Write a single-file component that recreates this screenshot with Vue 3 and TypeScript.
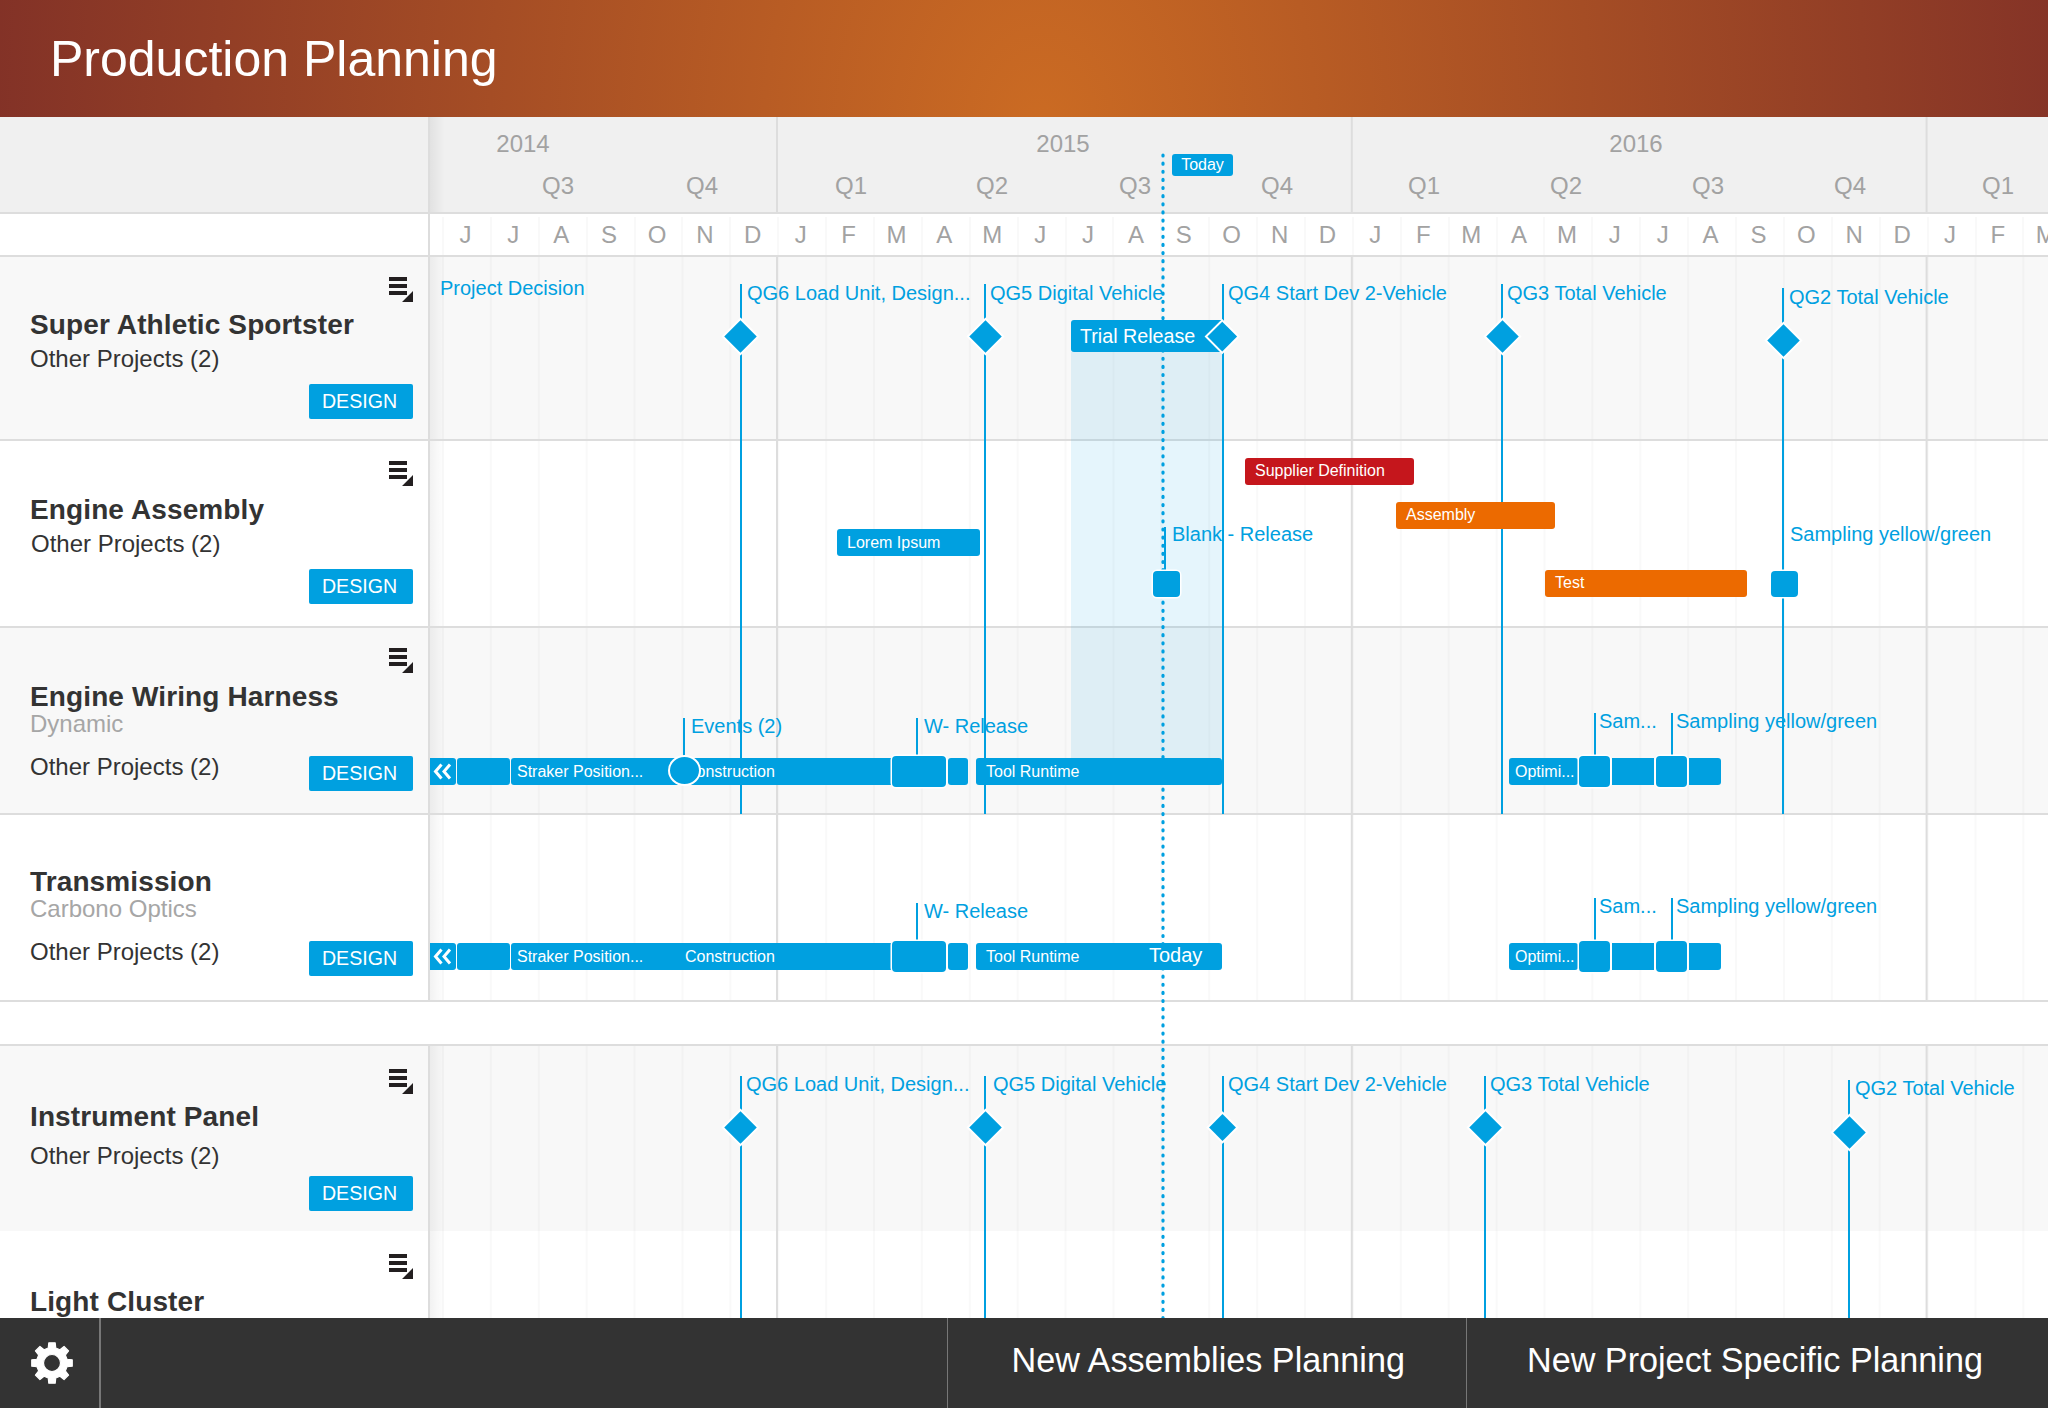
<script setup lang="ts">
// Production planning gantt: rows flow on the left, chart items sit on a canvas in page coordinates.
const BLUE = '#00a0e0'
const RED = '#c5161c'
const ORANGE = '#ec6a00'

const years = [
  { text: '2014', x: 523 },
  { text: '2015', x: 1063 },
  { text: '2016', x: 1636 },
]
const quarters = [
  ['Q3', 558], ['Q4', 702], ['Q1', 851], ['Q2', 992], ['Q3', 1135], ['Q4', 1277],
  ['Q1', 1424], ['Q2', 1566], ['Q3', 1708], ['Q4', 1850], ['Q1', 1998],
] as [string, number][]
const months = 'JJASONDJFMAMJJASONDJFMAMJJASONDJFM'.split('')

const rows = [
  { id: 'r1', title: 'Super Athletic Sportster', menu: true },
  { id: 'r2', title: 'Engine Assembly', menu: true },
  { id: 'r3', title: 'Engine Wiring Harness', sub: 'Dynamic', menu: true },
  { id: 'r4', title: 'Transmission', sub: 'Carbono Optics', menu: false },
]

type Line = { x: number; y1: number; y2: number }
const lines: Line[] = [
  { x: 740.5, y1: 284, y2: 814 },
  { x: 985, y1: 284, y2: 814 },
  { x: 1222.5, y1: 284, y2: 814 },
  { x: 1502, y1: 284, y2: 814 },
  { x: 1783, y1: 288, y2: 814 },
  { x: 1165, y1: 527, y2: 571 },
  { x: 684, y1: 718, y2: 756 },
  { x: 916.5, y1: 718, y2: 757 },
  { x: 1595, y1: 713, y2: 757 },
  { x: 1672, y1: 713, y2: 757 },
  { x: 916.5, y1: 903, y2: 942 },
  { x: 1595, y1: 898, y2: 942 },
  { x: 1672, y1: 898, y2: 942 },
  { x: 740.5, y1: 1076, y2: 1318 },
  { x: 985, y1: 1076, y2: 1318 },
  { x: 1222.5, y1: 1076, y2: 1318 },
  { x: 1485, y1: 1076, y2: 1318 },
  { x: 1849, y1: 1080, y2: 1318 },
]

// y is the text baseline
const labels = [
  { text: 'Project Decision', x: 440, y: 295 },
  { text: 'QG6 Load Unit, Design...', x: 747, y: 300 },
  { text: 'QG5 Digital Vehicle', x: 990, y: 300 },
  { text: 'QG4 Start Dev 2-Vehicle', x: 1228, y: 300 },
  { text: 'QG3 Total Vehicle', x: 1507, y: 300 },
  { text: 'QG2 Total Vehicle', x: 1789, y: 304 },
  { text: 'Blank - Release', x: 1172, y: 541 },
  { text: 'Sampling yellow/green', x: 1790, y: 541 },
  { text: 'Events (2)', x: 691, y: 733 },
  { text: 'W- Release', x: 924, y: 733 },
  { text: 'Sam...', x: 1599, y: 728 },
  { text: 'Sampling yellow/green', x: 1676, y: 728 },
  { text: 'W- Release', x: 924, y: 918 },
  { text: 'Sam...', x: 1599, y: 913 },
  { text: 'Sampling yellow/green', x: 1676, y: 913 },
  { text: 'QG6 Load Unit, Design...', x: 746, y: 1091 },
  { text: 'QG5 Digital Vehicle', x: 993, y: 1091 },
  { text: 'QG4 Start Dev 2-Vehicle', x: 1228, y: 1091 },
  { text: 'QG3 Total Vehicle', x: 1490, y: 1091 },
  { text: 'QG2 Total Vehicle', x: 1855, y: 1095 },
]

type Bar = { x1: number; x2: number; y: number; h?: number; text?: string; color?: string; pad?: number; cls?: string }

function track(y: number): Bar[] {
  return [
    { x1: 430, x2: 456, y, cls: 'flat-left chev' },
    { x1: 457, x2: 510, y },
    { x1: 511, x2: 684, y, text: 'Straker Position...', pad: 6, cls: 'flat-right' },
    { x1: 684, x2: 892, y, text: 'Construction', pad: 1, cls: 'flat-both' },
    { x1: 948, x2: 967.5, y },
    { x1: 976, x2: 1222, y, text: 'Tool Runtime', pad: 10 },
    { x1: 1509, x2: 1578, y, text: 'Optimi...', pad: 6 },
    { x1: 1612, x2: 1654, y, cls: 'flat-both' },
    { x1: 1689, x2: 1720.5, y, cls: 'flat-left' },
    { x1: 1579, x2: 1610, y: y - 2, h: 31, cls: 'node' },
    { x1: 1656, x2: 1687, y: y - 2, h: 31, cls: 'node' },
    { x1: 891.5, x2: 946, y: y - 2, h: 31, cls: 'node' },
  ]
}

const bars: Bar[] = [
  { x1: 1071, x2: 1222, y: 320, h: 32, text: 'Trial Release', pad: 9, cls: 'large flat-right' },
  { x1: 1245, x2: 1414, y: 458, text: 'Supplier Definition', color: RED, pad: 10, cls: 'lift' },
  { x1: 1396, x2: 1555, y: 502, text: 'Assembly', color: ORANGE, pad: 10, cls: 'lift' },
  { x1: 837, x2: 980, y: 529, text: 'Lorem Ipsum', pad: 10 },
  { x1: 1545, x2: 1747, y: 570, text: 'Test', color: ORANGE, pad: 10, cls: 'lift' },
  { x1: 1153, x2: 1180, y: 571, h: 26, cls: 'node' },
  { x1: 1771, x2: 1798, y: 571, h: 26, cls: 'node' },
  ...track(758),
  ...track(943),
]

const diamonds = [
  { x: 740.5, y: 336, s: 23 },
  { x: 985, y: 336, s: 23 },
  { x: 1222.5, y: 336, s: 20.5 },
  { x: 1502, y: 336, s: 23 },
  { x: 1783, y: 340, s: 23 },
  { x: 740.5, y: 1127, s: 23 },
  { x: 985, y: 1127, s: 23 },
  { x: 1222.5, y: 1127, s: 19 },
  { x: 1485, y: 1127, s: 23 },
  { x: 1849, y: 1132, s: 23 },
]

function barStyle(b: Bar) {
  return {
    left: `${b.x1}px`,
    top: `${b.y}px`,
    width: `${b.x2 - b.x1}px`,
    height: `${b.h ?? 27}px`,
    paddingLeft: `${b.pad ?? 0}px`,
    background: b.color ?? BLUE,
  }
}

function gearPath(cx: number, cy: number, outer: number, base: number, hole: number) {
  const pt = (deg: number, r: number) => {
    const a = (deg * Math.PI) / 180
    return `${(cx + Math.sin(a) * r).toFixed(2)} ${(cy - Math.cos(a) * r).toFixed(2)}`
  }
  let d = ''
  for (let i = 0; i < 8; i++) {
    const c = i * 45
    d += `${i ? 'L' : 'M'}${pt(c - 14, base)} L${pt(c - 9, outer)} L${pt(c + 9, outer)} L${pt(c + 14, base)} `
  }
  d += `Z M${cx - hole} ${cy} a${hole} ${hole} 0 1 0 ${hole * 2} 0 a${hole} ${hole} 0 1 0 ${-hole * 2} 0 Z`
  return d
}
const gear = gearPath(26, 26, 20.5, 15.5, 8.5)
</script>

<template>
  <div class="page">
    <header class="top">
      <h1>Production Planning</h1>
    </header>

    <div class="scale">
      <div class="scale-side"></div>
      <div class="scale-track">
        <span v-for="y in years" :key="y.text" class="tick year" :style="{ left: `${y.x - 430}px` }">{{ y.text }}</span>
        <span v-for="(q, i) in quarters" :key="i" class="tick quarter" :style="{ left: `${q[1] - 430}px` }">{{ q[0] }}</span>
      </div>
    </div>

    <div class="months">
      <div class="months-side"></div>
      <div class="months-track">
        <span v-for="(m, i) in months" :key="i" class="month">{{ m }}</span>
      </div>
    </div>

    <section v-for="r in rows" :key="r.id" class="row" :class="r.id">
      <div class="side">
        <svg class="menu" :class="{ off: !r.menu }" viewBox="0 0 25 25" width="25" height="25">
          <path d="M1 0h18v4H1zM1 7h18v4H1zM1 14h18v4H1zM25 14v11H14z" fill="#231f20" />
        </svg>
        <div class="title">{{ r.title }}</div>
        <template v-if="r.sub">
          <div class="sub">{{ r.sub }}</div>
          <div class="foot">
            <span class="other">Other Projects (2)</span>
            <button class="design">DESIGN</button>
          </div>
        </template>
        <template v-else>
          <div class="other">Other Projects (2)</div>
          <button class="design">DESIGN</button>
        </template>
      </div>
      <div class="lane"></div>
    </section>

    <div class="gap"></div>

    <section class="row r5">
      <div class="side">
        <svg class="menu" viewBox="0 0 25 25" width="25" height="25">
          <path d="M1 0h18v4H1zM1 7h18v4H1zM1 14h18v4H1zM25 14v11H14z" fill="#231f20" />
        </svg>
        <div class="title">Instrument Panel</div>
        <div class="other">Other Projects (2)</div>
        <button class="design">DESIGN</button>
      </div>
      <div class="lane"></div>
    </section>

    <!-- the last row runs under the bottom bar, only its title shows -->
    <section class="row r6">
      <div class="side">
        <svg class="menu" viewBox="0 0 25 25" width="25" height="25">
          <path d="M1 0h18v4H1zM1 7h18v4H1zM1 14h18v4H1zM25 14v11H14z" fill="#231f20" />
        </svg>
        <div class="title">Light Cluster</div>
      </div>
      <div class="lane"></div>
    </section>

    <footer class="bar">
      <div class="gear-cell">
        <svg viewBox="0 0 52 52" width="52" height="52">
          <path :d="gear" fill="#fff" stroke="#fff" stroke-width="1.2" stroke-linejoin="round" fill-rule="evenodd" />
        </svg>
      </div>
      <div class="bar-space"></div>
      <a class="bar-link">New Assemblies Planning</a>
      <a class="bar-link">New Project Specific Planning</a>
    </footer>

    <div class="canvas">
      <div class="span"></div>
      <svg class="today-line" width="4" height="1165">
        <line x1="2" y1="2" x2="2" y2="1165" stroke="#00a0e0" stroke-width="3.2" stroke-linecap="round" stroke-dasharray="1 7.13" />
      </svg>
      <div class="today-tag">Today</div>

      <div
        v-for="(l, i) in lines"
        :key="`l${i}`"
        class="vline"
        :style="{ left: `${l.x - 1}px`, top: `${l.y1}px`, height: `${l.y2 - l.y1}px` }"
      ></div>
      <span
        v-for="(t, i) in labels"
        :key="`t${i}`"
        class="label"
        :style="{ left: `${t.x}px`, top: `${t.y - 19}px` }"
      >{{ t.text }}</span>

      <div v-for="(b, i) in bars" :key="`b${i}`" class="gbar" :class="b.cls" :style="barStyle(b)">
        <svg v-if="b.cls && b.cls.includes('chev')" width="20" height="17" viewBox="0 0 20 17">
          <path d="M8.5 1.5 2.5 8.5l6 7M17 1.5l-6 7 6 7" fill="none" stroke="#fff" stroke-width="3" />
        </svg>
        {{ b.text }}
      </div>

      <div class="event"></div>
      <span class="label today-inline">Today</span>

      <div
        v-for="(d, i) in diamonds"
        :key="`d${i}`"
        class="diamond"
        :style="{ left: `${d.x - d.s / 2}px`, top: `${d.y - d.s / 2}px`, width: `${d.s}px`, height: `${d.s}px` }"
      ></div>
    </div>
  </div>
</template>

<style>
html,
body {
  margin: 0;
  overflow: hidden;
}
</style>

<style scoped>
.page {
  position: relative;
  height: 100vh;
  display: flex;
  flex-direction: column;
  overflow: hidden;
  font-family: 'Liberation Sans', Arial, sans-serif;
  color: #333;
  background: #fff;
}

.top {
  flex: none;
  height: 117px;
  display: flex;
  align-items: center;
  padding-left: 50px;
  background: radial-gradient(ellipse 1100px 1500px at 1040px 130px, #cb6b23 0%, #7f2f27 100%);
}
.top h1 {
  margin: 1px 0 0;
  font-size: 50px;
  line-height: 60px;
  font-weight: 400;
  color: #fff;
}

.scale {
  flex: none;
  height: 97px;
  box-sizing: border-box;
  display: flex;
  background: #f0f0f0;
  border-bottom: 2px solid #ddd;
}
.scale-side,
.months-side {
  flex: none;
  width: 428px;
  border-right: 2px solid #ddd;
}
.scale-track {
  flex: 1;
  position: relative;
  background-image: linear-gradient(90deg, rgba(0, 0, 0, 0.06), transparent 15px),
    linear-gradient(90deg, #ddd 2px, transparent 2px);
  background-size: 100% 100%, 574.8px 100%;
  background-position: 0 0, 346px 0;
  background-repeat: no-repeat, repeat-x;
}
.tick {
  position: absolute;
  transform: translateX(-50%);
  font-size: 24px;
  line-height: 28px;
  color: #a2a2a2;
}
.year {
  top: 13px;
}
.quarter {
  top: 55px;
}

.months {
  flex: none;
  height: 43px;
  box-sizing: border-box;
  display: flex;
  border-bottom: 2px solid #ddd;
}
.months-track {
  flex: 1;
  display: flex;
  padding-left: 12px;
  overflow: hidden;
}
.month {
  flex: none;
  box-sizing: border-box;
  width: 47.9px;
  padding-right: 1px;
  text-align: center;
  font-size: 24px;
  line-height: 41px;
  color: #a2a2a2;
  background: linear-gradient(90deg, rgba(0, 0, 0, 0.022) 2px, transparent 2px) no-repeat 0 3px;
}

.row {
  display: flex;
  box-sizing: border-box;
  flex: none;
  height: 187px;
  border-bottom: 2px solid #ddd;
  --menu-top: 20px;
  --title-top: 7px;
  --other-top: 3px;
  --btn-top: 10px;
}
.r1 {
  height: 184px;
  background: #f8f8f8;
}
.r2 {
  --title-top: 8px;
}
.r2 .other {
  margin-left: 1px;
}
.r3 {
  background: #f8f8f8;
  --title-top: 8px;
}
.r4 {
  --title-top: 6px;
}
.r5 {
  height: 185px;
  border-bottom: 0;
  background: #f8f8f8;
  --menu-top: 23px;
  --other-top: 8px;
  --btn-top: 5px;
}
.r6 {
  flex: 1;
  min-height: 0;
  overflow: hidden;
  border-bottom: 0;
  --menu-top: 23px;
}

.side {
  flex: none;
  width: 430px;
  box-sizing: border-box;
  display: flex;
  flex-direction: column;
  padding: 0 15px 0 30px;
  border-right: 2px solid #ddd;
}
.menu {
  flex: none;
  align-self: flex-end;
  margin-top: var(--menu-top);
}
.menu.off {
  visibility: hidden;
}
.title {
  margin-top: var(--title-top);
  font-size: 28px;
  line-height: 32px;
  font-weight: 700;
  letter-spacing: 0.12px;
  color: #333;
}
.sub {
  margin-top: -2px;
  font-size: 24px;
  line-height: 26px;
  color: #a6a6a6;
}
.other {
  margin-top: var(--other-top);
  font-size: 24px;
  line-height: 30px;
  color: #333;
}
.design {
  align-self: flex-end;
  flex: none;
  width: 104px;
  height: 35px;
  margin-top: var(--btn-top);
  padding: 0 3px 0 0;
  border: 0;
  border-radius: 2px;
  background: #00a0e0;
  color: #fff;
  font: 19.6px/35px 'Liberation Sans', Arial, sans-serif;
}
.foot {
  display: flex;
  justify-content: space-between;
  margin-top: 19px;
}
.foot .other {
  margin-top: -4px;
}
.foot .design {
  margin-top: 0;
  align-self: flex-start;
}
.lane {
  flex: 1;
  background-image: linear-gradient(90deg, rgba(0, 0, 0, 0.05), transparent 15px),
    linear-gradient(90deg, #ddd 2px, transparent 2px),
    linear-gradient(90deg, rgba(0, 0, 0, 0.022) 2px, transparent 2px);
  background-size: 100% 100%, 574.8px 100%, 47.9px 100%;
  background-position: 0 0, 346px 0, 12px 0;
  background-repeat: no-repeat, repeat-x, repeat-x;
}

.gap {
  flex: none;
  height: 44px;
  box-sizing: border-box;
  border-bottom: 2px solid #ddd;
}

.bar {
  flex: none;
  height: 90px;
  position: relative;
  z-index: 2;
  display: flex;
  background: #333;
  color: #fff;
}
.gear-cell {
  flex: none;
  width: 101px;
  display: flex;
  align-items: center;
  padding-left: 26px;
  box-sizing: border-box;
  border-right: 2px solid #777;
}
.bar-space {
  flex: 1;
}
.bar-link {
  flex: none;
  padding: 0 61px 6px 64px;
  border-left: 1px solid #777;
  font-size: 34.2px;
  line-height: 84px;
}
.bar-link:last-child {
  padding: 0 65px 6px 60px;
}

.canvas {
  position: absolute;
  inset: 0;
  overflow: hidden;
  pointer-events: none;
}
.span {
  position: absolute;
  left: 1071px;
  top: 352px;
  width: 151px;
  height: 406px;
  background: rgba(0, 160, 224, 0.1);
}
.today-line {
  position: absolute;
  left: 1161px;
  top: 153px;
}
.today-tag {
  position: absolute;
  left: 1172px;
  top: 154px;
  width: 61px;
  height: 22px;
  border-radius: 3px;
  background: #00a0e0;
  color: #fff;
  font-size: 16px;
  line-height: 22px;
  text-align: center;
}
.vline {
  position: absolute;
  width: 2px;
  background: #00a0e0;
}
.label {
  position: absolute;
  font-size: 20px;
  line-height: 24px;
  color: #00a0e0;
  white-space: nowrap;
}
.gbar {
  position: absolute;
  box-sizing: border-box;
  display: flex;
  align-items: center;
  border-radius: 3px;
  color: #fff;
  font-size: 16px;
  white-space: nowrap;
}
.gbar.large {
  font-size: 19.7px;
}
.gbar.lift {
  padding-bottom: 2px;
}
.flat-left {
  border-radius: 0 3px 3px 0;
}
.flat-right {
  border-radius: 3px 0 0 3px;
}
.flat-both {
  border-radius: 0;
}
.chev {
  padding-left: 3px !important;
}
.node {
  border-radius: 4px;
  box-shadow: 0 0 0 1.5px #fff;
}
.event {
  position: absolute;
  left: 668px;
  top: 755px;
  width: 33px;
  height: 31px;
  box-sizing: border-box;
  border: 2px solid #fff;
  border-radius: 50%;
  background: #00a0e0;
}
.today-inline {
  left: 1149px;
  top: 943px;
  color: #fff;
}
.diamond {
  position: absolute;
  box-sizing: border-box;
  background: #00a0e0;
  transform: rotate(45deg);
  box-shadow: 0 0 0 2px #fff;
}
</style>
